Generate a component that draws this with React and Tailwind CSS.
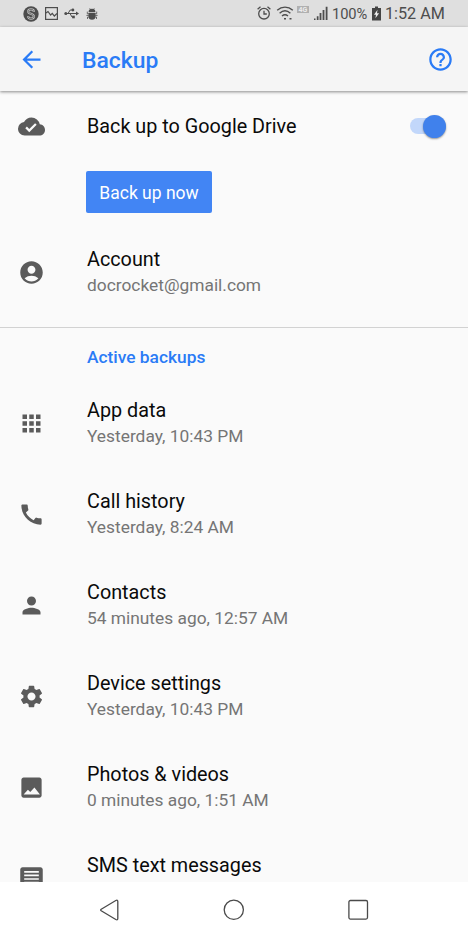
import {
  MdAccountCircle,
  MdApps,
  MdArrowBack,
  MdCall,
  MdCloudDone,
  MdHelpOutline,
  MdPerson,
  MdSettings,
} from "react-icons/md";

// The two peaks are wider and lower than in the stock image glyph.
function PhotoIcon({ className }) {
  return (
    <svg viewBox="0 0 24 24" fill="currentColor" className={className}>
      <path d="M21 19V5c0-1.100-.9-2-2-2H5c-1.100 0-2 .9-2 2v14c0 1.100.9 2 2 2h14c1.100 0 2-.9 2-2zM8.800 13.900l2.100 2.100 3.700-4 4.900 6.200H5z" />
    </svg>
  );
}

function SmsIcon({ className }) {
  return (
    <svg viewBox="0 0 24 24" fill="currentColor" className={className}>
      <path
        fillRule="evenodd"
        d="M4 2h16c1.100 0 2 .9 2 2v18l-4-4H4c-1.100 0-2-.9-2-2V4c0-1.100.9-2 2-2zM5.500 5.300v1.500h13V5.300zM5.500 8.500V10h13V8.500zM5.500 11.700v1.500h13v-1.500zM5.500 14.900v1.300h13v-1.300z"
      />
    </svg>
  );
}

const BACKUPS = [
  { title: "App data", detail: "Yesterday, 10:43 PM", icon: MdApps },
  { title: "Call history", detail: "Yesterday, 8:24 AM", icon: MdCall },
  { title: "Contacts", detail: "54 minutes ago, 12:57 AM", icon: MdPerson },
  { title: "Device settings", detail: "Yesterday, 10:43 PM", icon: MdSettings },
  { title: "Photos & videos", detail: "0 minutes ago, 1:51 AM", icon: PhotoIcon },
  { title: "SMS text messages", icon: SmsIcon },
];

function NotificationIcons() {
  return (
    <div className="flex items-center text-[#4d4d4d]">
      {/* app badge */}
      <svg viewBox="0 0 16 16" className="h-4 w-4" fill="none">
        <circle cx="8" cy="8" r="7.700" fill="currentColor" />
        <path
          d="M10.800 5.900V5.200C10.800 4 9.800 3.400 8 3.400S5.200 4 5.200 5.400C5.200 8.200 10.800 7.500 10.800 10.500c0 1.400-1 2.100-2.800 2.100s-2.800-.7-2.800-2v-.5"
          stroke="#c4c4c4"
          strokeWidth="2.200"
        />
        <path
          d="M10.800 5.900V5.200C10.800 4 9.800 3.400 8 3.400S5.200 4 5.200 5.400C5.200 8.200 10.800 7.500 10.800 10.500c0 1.400-1 2.100-2.800 2.100s-2.800-.7-2.800-2v-.5"
          stroke="currentColor"
          strokeWidth=".7"
        />
      </svg>
      {/* picture */}
      <svg viewBox="0 0 13 13" className="ml-[6px] h-[13px] w-[13px]" fill="none" stroke="currentColor">
        <rect x=".6" y=".6" width="11.800" height="11.800" strokeWidth="1.200" />
        <path d="M1 6l2-1.500L5.600 8l1.700-1.600 2 2.600L12 6.500" strokeWidth="1.200" />
      </svg>
      {/* usb */}
      <svg viewBox="0 0 15 11" className="ml-[6px] h-[11px] w-[15px]" fill="none" stroke="currentColor">
        <path d="M2 5.500h11M4 5.500L6.200 2H8M6 5.500L8 9h2" strokeWidth="1" />
        <circle cx="1.800" cy="5.500" r="1.500" fill="currentColor" stroke="none" />
        <path d="M12 3.600l3 1.900-3 1.900z" fill="currentColor" stroke="none" />
        <circle cx="8.900" cy="2" r="1.400" fill="currentColor" stroke="none" />
        <rect x="8.200" y="7.700" width="2.600" height="2.600" fill="currentColor" stroke="none" />
      </svg>
      {/* debug */}
      <svg viewBox="0 0 12 12" className="ml-[7px] h-3 w-3" fill="none" stroke="currentColor">
        <path d="M2.600 3.900a3.400 3.200 0 0 1 6.800 0z" fill="currentColor" stroke="none" />
        <path d="M2.600 4.700h6.800v3.700a3.400 3.300 0 0 1-6.800 0z" fill="currentColor" stroke="none" />
        <path d="M3.700.3l1 1.500M8.300.3l-1 1.500M3 5.800H1.300V3.600M9 5.800h1.700V3.600M3 7.400H.4M9 7.400h2.600M3.200 9H1.500v2M8.800 9h1.700v2" strokeWidth=".8" />
      </svg>
    </div>
  );
}

function StatusBar() {
  return (
    <div className="flex h-[27px] shrink-0 items-center justify-between bg-[#dfdfdf] pr-[25px] pl-[23px]">
      <NotificationIcons />
      <div className="flex items-center text-[#4d4d4d]">
        {/* alarm */}
        <svg viewBox="0 0 14 14" className="h-[14px] w-[14px]" fill="none" stroke="currentColor">
          <circle cx="7" cy="7.700" r="5.300" strokeWidth="1.300" />
          <path d="M7 4.700V8h2.800M.6 3.300L3.500.8M13.400 3.300L10.500.8" strokeWidth="1.300" />
        </svg>
        {/* wifi */}
        <svg viewBox="0 0 18 14" className="ml-[5px] h-[14px] w-[18px]" fill="none" stroke="currentColor">
          <path d="M1.200 4.300c4.700-4.200 10.900-4.200 15.600 0M3.600 7.200c3.300-2.900 7.500-2.900 10.800 0M6 10c1.800-1.500 4.200-1.500 6 0" strokeWidth="1.400" />
          <path d="M8 12.800h2M13.500 12.800h2" strokeWidth="1.500" />
        </svg>
        {/* network type */}
        <svg viewBox="0 0 12 7" className="mb-[7px] ml-[3px] h-[7px] w-3">
          <rect width="12" height="7" fill="#b0b0b0" />
          <text x="6" y="6" textAnchor="middle" fontSize="7" fontWeight="700" fill="#ececec">
            4G
          </text>
        </svg>
        {/* signal */}
        <svg viewBox="0 0 14 14" className="ml-[5px] h-[14px] w-[14px]" fill="currentColor">
          <path d="M0 12.500h1.500V14H0zM2.800 10.300h1.700V14H2.800zM5.600 7h1.800v7H5.600zM8.600 4h1.800v10H8.600zM11.700.7h1.800V14h-1.800z" />
        </svg>
        <span className="ml-1 w-9 pt-px text-[14.700px] leading-none tracking-[-0.100px] whitespace-nowrap">100%</span>
        {/* battery */}
        <svg viewBox="0 0 9 15" className="ml-1 h-[15px] w-[9px]">
          <path d="M3 .5h3V2h3v12.500H0V2h3z" fill="#444" />
          <path d="M5.500 3.800L2 8.800h2l-.6 3.500 3.700-5H5z" fill="#eee" />
        </svg>
        <span className="ml-1 w-[58px] pt-px text-[16.200px] leading-none whitespace-nowrap">1:52 AM</span>
      </div>
    </div>
  );
}

function AppBar() {
  return (
    <header className="relative flex h-16 shrink-0 items-center bg-[#f5f5f5] pr-[14px] pl-[18px] text-[#2a7bf6] shadow-[0_1px_3px_rgba(0,0,0,0.450)]">
      <MdArrowBack className="h-[27px] w-[27px]" />
      <h1 className="ml-[37px] flex-1 pt-[3px] text-[22.900px] leading-7 font-medium">Backup</h1>
      <MdHelpOutline className="h-[27px] w-[27px]" />
    </header>
  );
}

function Row({ icon: Icon, title, detail }) {
  return (
    <div className="flex h-[91px] shrink-0 items-center pl-[18px]">
      <Icon className="h-[27px] w-[27px] shrink-0 text-[#5b5b5b]" />
      <div className="ml-[42px] h-[51px]">
        <p className="text-[19.800px] leading-[26px] text-[#0a0a0a]">{title}</p>
        {detail && <p className="text-[17.350px] leading-[25px] text-[#757575]">{detail}</p>}
      </div>
    </div>
  );
}

function Toggle() {
  return (
    <div className="flex h-4 w-[36px] items-center justify-end rounded-full bg-[#c2d7fa]">
      <span className="h-[23px] w-[23px] shrink-0 rounded-full bg-[#4081ec] shadow-[0_1px_2px_rgba(0,0,0,0.400)]" />
    </div>
  );
}

function NavBar() {
  return (
    <nav className="flex h-[55px] shrink-0 items-center justify-between bg-white px-[99px]">
      <svg viewBox="0 0 22 22" className="h-[22px] w-[22px]" fill="none" stroke="#4a4a4a" strokeWidth="1.300">
        <path d="M2.200 10.200L16.800 1.500q2-.9 2 1v17q0 1.900-2 1L2.200 11.800q-1-.8 0-1.600z" />
      </svg>
      <svg viewBox="0 0 22 22" className="h-[22px] w-[22px]" fill="none" stroke="#4a4a4a" strokeWidth="1.300">
        <circle cx="10.800" cy="10.800" r="9.600" />
      </svg>
      <svg viewBox="0 0 22 22" className="h-[22px] w-[22px]" fill="none" stroke="#4a4a4a" strokeWidth="1.300">
        <rect x="1.900" y="1.500" width="18.600" height="18.600" rx="1.500" />
      </svg>
    </nav>
  );
}

export default function App() {
  return (
    <div className="flex h-[937px] w-[468px] flex-col overflow-hidden bg-[#fafafa] font-['Roboto',sans-serif]">
      <StatusBar />
      <AppBar />
      <main className="flex min-h-0 flex-1 flex-col overflow-hidden">
        <div className="flex h-[70px] shrink-0 items-center pr-[22px] pl-[18px]">
          <MdCloudDone className="h-[27px] w-[27px] text-[#5b5b5b]" />
          <p className="ml-[42px] flex-1 pt-[2px] text-[19.800px] leading-[26px] text-[#0a0a0a]">Back up to Google Drive</p>
          <Toggle />
        </div>
        <div className="flex h-[66px] shrink-0 pt-[10px] pl-[86px]">
          <button
            type="button"
            className="h-[42px] w-[126px] rounded-[2px] bg-[#4285f4] pt-[3px] text-[17.500px] whitespace-nowrap text-white"
          >
            Back up now
          </button>
        </div>
        <Row icon={MdAccountCircle} title="Account" detail="docrocket@gmail.com" />
        <div className="mt-[9px] h-px shrink-0 bg-[#d2d2d2]" />
        <h2 className="h-[50px] shrink-0 pt-4 pl-[87px] text-[17.350px] leading-[26px] font-medium text-[#2a7bf6]">
          Active backups
        </h2>
        {BACKUPS.map((item) => (
          <Row key={item.title} {...item} />
        ))}
      </main>
      <NavBar />
    </div>
  );
}
